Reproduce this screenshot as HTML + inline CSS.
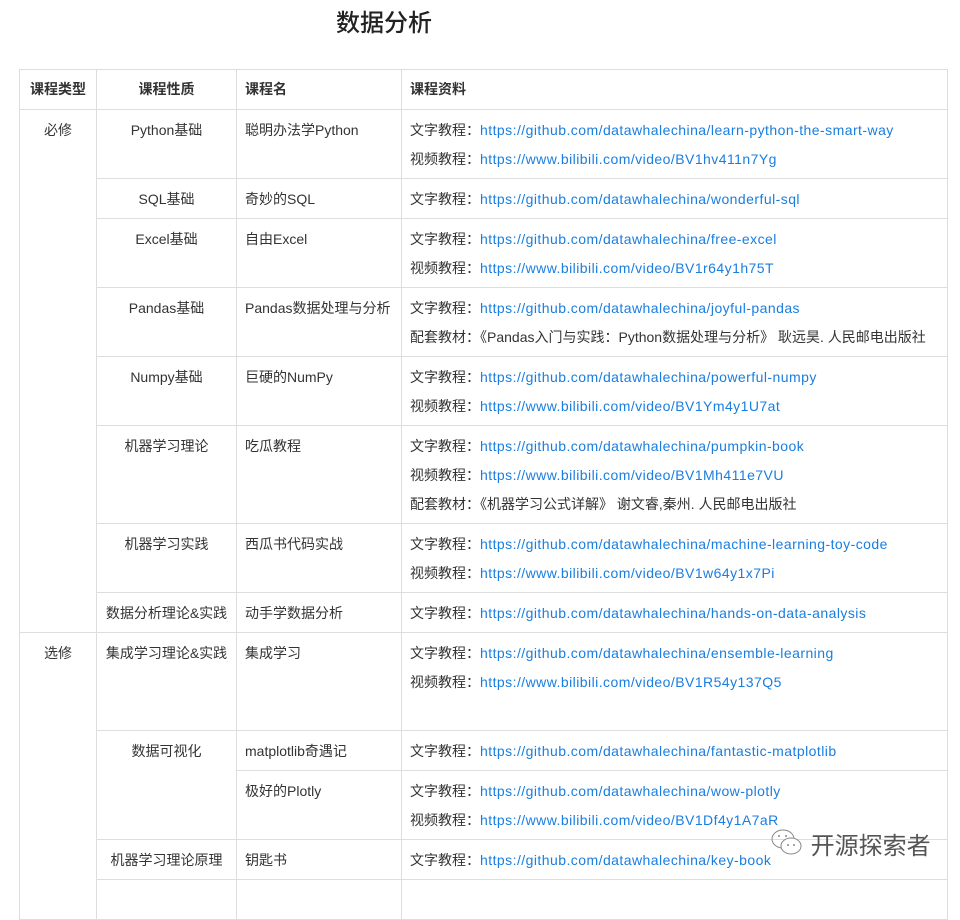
<!DOCTYPE html>
<html><head><meta charset="utf-8"><style>
body{margin:0;background:#fff;width:960px;height:885px;overflow:hidden;font-family:"Liberation Sans","Noto Sans CJK SC",sans-serif;color:#333;font-size:14px}
h1{position:absolute;left:0;width:768px;top:6px;margin:0;text-align:center;font-size:24px;font-weight:500;color:#222;line-height:36px}
table{position:absolute;left:19px;top:69px;border-collapse:collapse;width:929px}
td,th{border:1px solid #ddd;vertical-align:top;padding:6px 8px 0;line-height:29px;text-align:left}
th{font-weight:bold;height:34px;padding-top:5px}
.c{text-align:center}
a{color:#1a7ee0;text-decoration:none;letter-spacing:0.45px}
.wm{position:absolute;left:770px;top:826px;font-size:24px;color:#555}
</style></head><body>
<h1>数据分析</h1>
<table>
<colgroup><col style="width:77px"><col style="width:140px"><col style="width:165px"><col></colgroup>
<tr><th class="c">课程类型</th><th class="c">课程性质</th><th>课程名</th><th>课程资料</th></tr>
<tr style="height:69px"><td class="c" rowspan="8">必修</td><td class="c">Python基础</td><td>聪明办法学Python</td><td>文字教程：<a>https://github.com/datawhalechina/learn-python-the-smart-way</a><br>视频教程：<a>https://www.bilibili.com/video/BV1hv411n7Yg</a></td></tr>
<tr style="height:40px"><td class="c">SQL基础</td><td>奇妙的SQL</td><td>文字教程：<a>https://github.com/datawhalechina/wonderful-sql</a></td></tr>
<tr style="height:69px"><td class="c">Excel基础</td><td>自由Excel</td><td>文字教程：<a>https://github.com/datawhalechina/free-excel</a><br>视频教程：<a>https://www.bilibili.com/video/BV1r64y1h75T</a></td></tr>
<tr style="height:69px"><td class="c">Pandas基础</td><td>Pandas数据处理与分析</td><td>文字教程：<a>https://github.com/datawhalechina/joyful-pandas</a><br>配套教材：《Pandas入门与实践：Python数据处理与分析》 耿远昊. 人民邮电出版社</td></tr>
<tr style="height:69px"><td class="c">Numpy基础</td><td>巨硬的NumPy</td><td>文字教程：<a>https://github.com/datawhalechina/powerful-numpy</a><br>视频教程：<a>https://www.bilibili.com/video/BV1Ym4y1U7at</a></td></tr>
<tr style="height:98px"><td class="c">机器学习理论</td><td>吃瓜教程</td><td>文字教程：<a>https://github.com/datawhalechina/pumpkin-book</a><br>视频教程：<a>https://www.bilibili.com/video/BV1Mh411e7VU</a><br>配套教材：《机器学习公式详解》 谢文睿,秦州. 人民邮电出版社</td></tr>
<tr style="height:69px"><td class="c">机器学习实践</td><td>西瓜书代码实战</td><td>文字教程：<a>https://github.com/datawhalechina/machine-learning-toy-code</a><br>视频教程：<a>https://www.bilibili.com/video/BV1w64y1x7Pi</a></td></tr>
<tr style="height:40px"><td class="c">数据分析理论&amp;实践</td><td>动手学数据分析</td><td>文字教程：<a>https://github.com/datawhalechina/hands-on-data-analysis</a></td></tr>
<tr style="height:98px"><td class="c" rowspan="5">选修</td><td class="c">集成学习理论&amp;实践</td><td>集成学习</td><td>文字教程：<a>https://github.com/datawhalechina/ensemble-learning</a><br>视频教程：<a>https://www.bilibili.com/video/BV1R54y137Q5</a></td></tr>
<tr style="height:40px"><td class="c" rowspan="2">数据可视化</td><td>matplotlib奇遇记</td><td>文字教程：<a>https://github.com/datawhalechina/fantastic-matplotlib</a></td></tr>
<tr style="height:69px"><td>极好的Plotly</td><td>文字教程：<a>https://github.com/datawhalechina/wow-plotly</a><br>视频教程：<a>https://www.bilibili.com/video/BV1Df4y1A7aR</a></td></tr>
<tr style="height:40px"><td class="c">机器学习理论原理</td><td>钥匙书</td><td>文字教程：<a>https://github.com/datawhalechina/key-book</a></td></tr>
<tr style="height:40px"><td class="c"></td><td></td><td></td></tr>
</table>
<div class="wm"><svg width="34" height="30" viewBox="0 0 34 30" style="vertical-align:-4px"><ellipse cx="13" cy="11" rx="11" ry="9" fill="none" stroke="#888" stroke-width="1"/><ellipse cx="21" cy="18" rx="10" ry="8" fill="#fff" stroke="#888" stroke-width="1"/><circle cx="9" cy="8" r="1" fill="#888"/><circle cx="16" cy="8" r="1" fill="#888"/><circle cx="18" cy="17" r="1" fill="#888"/><circle cx="24" cy="17" r="1" fill="#888"/></svg> 开源探索者</div>
</body></html>
